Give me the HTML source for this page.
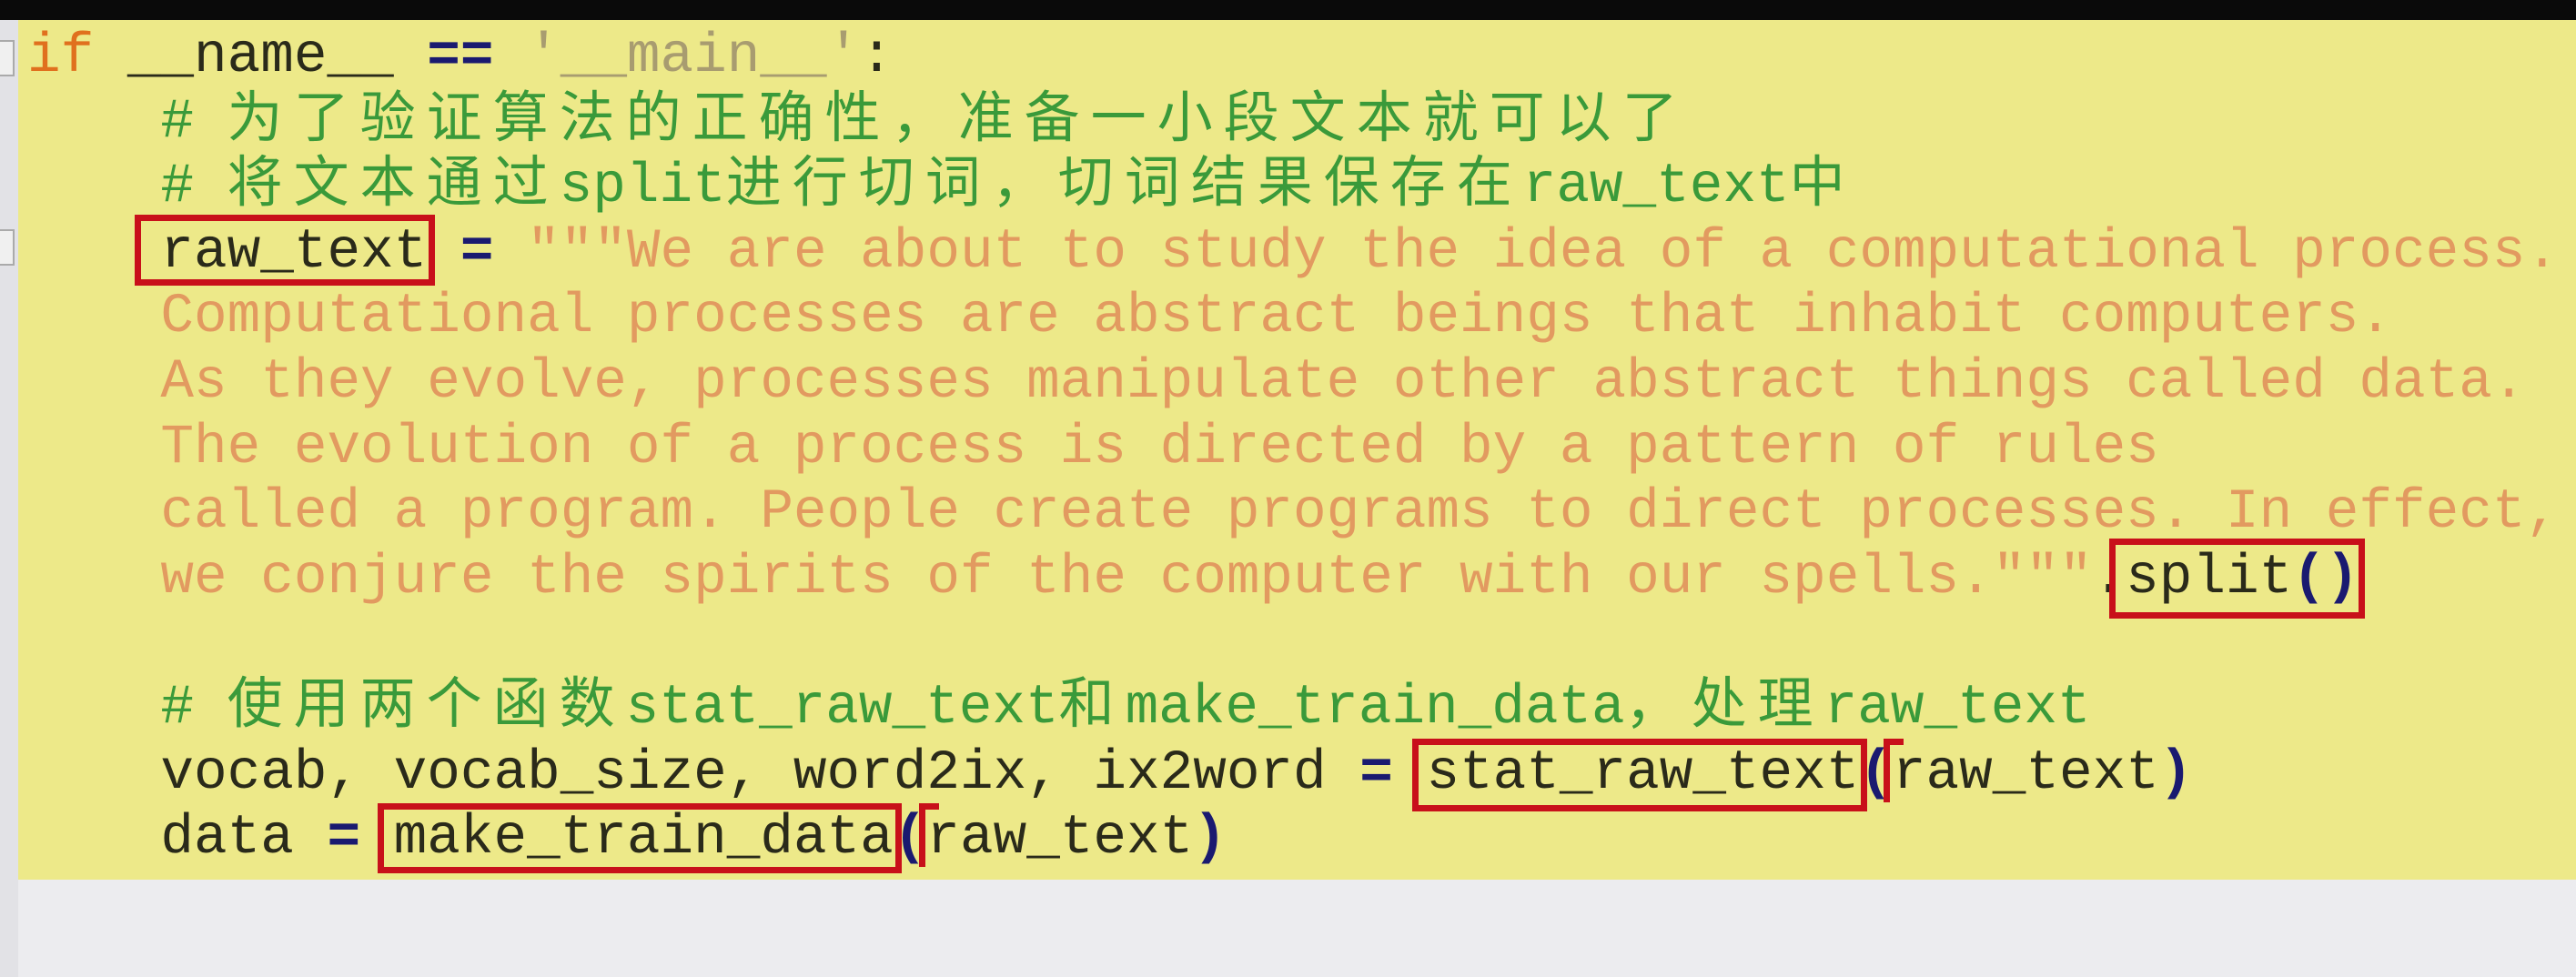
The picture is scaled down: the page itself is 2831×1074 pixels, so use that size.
<!DOCTYPE html>
<html><head><meta charset="utf-8"><style>
html,body{margin:0;padding:0}
body{width:2831px;height:1074px;background:#ececef;position:relative;overflow:hidden}
#top{position:absolute;left:0;top:0;width:2831px;height:22px;background:#0a0a0a}
#yel{position:absolute;left:20px;top:22px;width:2811px;height:945px;background:#ede989}
#gut{position:absolute;left:0;top:22px;width:20px;height:1052px;background:#e2e2e6}
pre{position:absolute;left:30px;top:27px;margin:0;font-family:"Liberation Mono","Noto Sans CJK SC",monospace;font-size:61px;line-height:71.6px;color:#2a2a1a;white-space:pre}
.k{color:#e0701e}.g{color:#3a9a3a}.s{color:#e29a60}.o{color:#1a1a70;font-weight:bold}.m{color:#a89c70}
.c{letter-spacing:12px}
.b{position:absolute;border:7px solid #c8101a;box-sizing:border-box}
.f{position:absolute;left:0;width:14px;height:36px;border:2px solid #aaa;border-left:none;background:#f0f0f0}
</style></head><body>
<div id="top"></div><div id="yel"></div><div id="gut"></div>
<div class="f" style="top:44px"></div><div class="f" style="top:252px"></div>
<pre><span class="k">if</span> __name__ <span class="o">==</span> <span class="m">'__main__'</span>:
    <span class="g"># <span class="c">为了验证算法的正确性，准备一小段文本就可以了</span></span>
    <span class="g"># <span class="c">将文本通过</span>split<span class="c">进行切词，切词结果保存在</span>raw_text<span class="c">中</span></span>
    raw_text <span class="o">=</span> <span class="s">"""We are about to study the idea of a computational process.
    Computational processes are abstract beings that inhabit computers.
    As they evolve, processes manipulate other abstract things called data.
    The evolution of a process is directed by a pattern of rules
    called a program. People create programs to direct processes. In effect,
    we conjure the spirits of the computer with our spells."""</span>.split<span class="o">()</span>

    <span class="g"># <span class="c">使用两个函数</span>stat_raw_text<span class="c">和</span>make_train_data<span class="c">，处理</span>raw_text</span>
    vocab, vocab_size, word2ix, ix2word <span class="o">=</span> stat_raw_text<span class="o">(</span>raw_text<span class="o">)</span>
    data <span class="o">=</span> make_train_data<span class="o">(</span>raw_text<span class="o">)</span></pre>
<div class="b" style="left:148px;top:236px;width:330px;height:78px"></div>
<div class="b" style="left:2318px;top:592px;width:281px;height:88px"></div>
<div class="b" style="left:1552px;top:812px;width:500px;height:80px"></div>
<div class="b" style="left:415px;top:883px;width:576px;height:77px"></div>
<div style="position:absolute;left:2070px;top:812px;width:7px;height:70px;background:#c8101a"></div>
<div style="position:absolute;left:2070px;top:812px;width:22px;height:7px;background:#c8101a"></div>
<div style="position:absolute;left:1010px;top:883px;width:7px;height:70px;background:#c8101a"></div>
<div style="position:absolute;left:1010px;top:883px;width:22px;height:7px;background:#c8101a"></div>
</body></html>
